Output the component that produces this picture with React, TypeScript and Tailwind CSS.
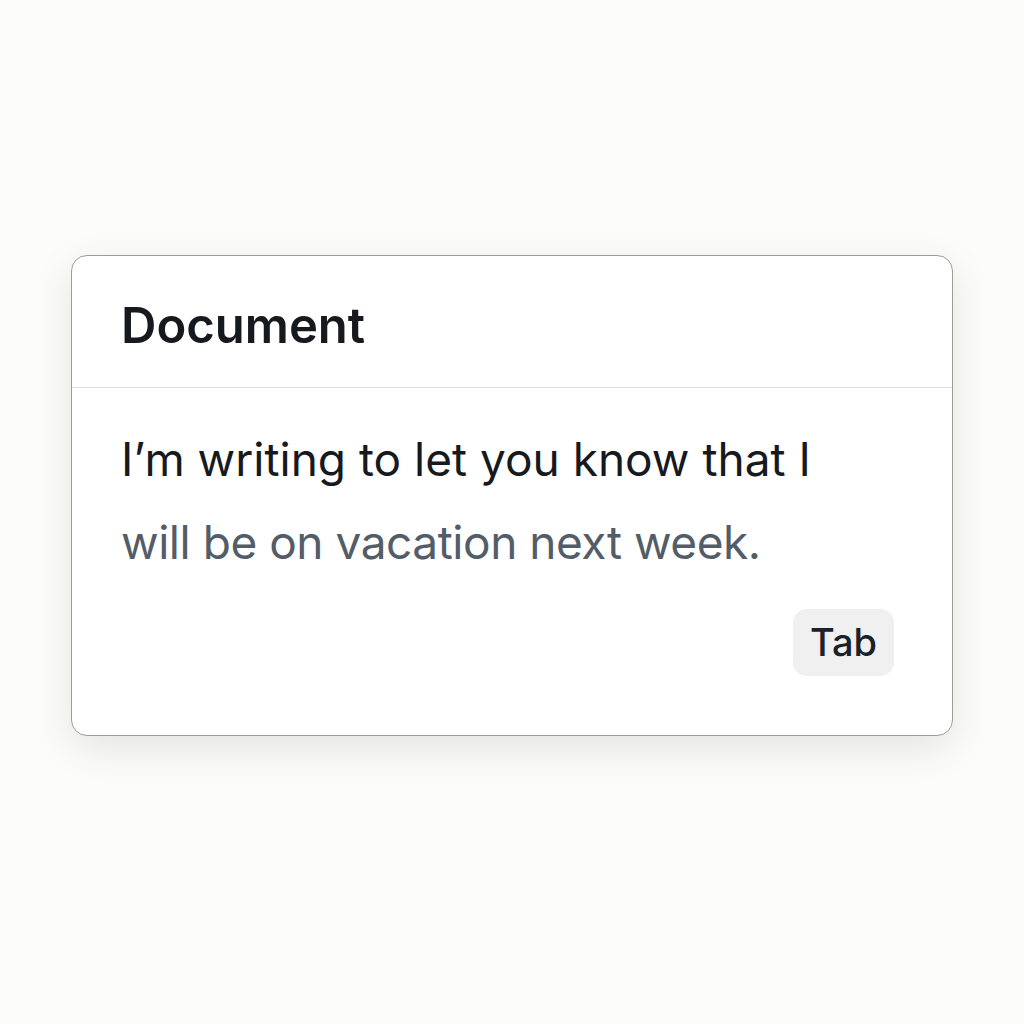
export default function App() {
  return (
    <div className="w-[1024px] h-[1024px] bg-[#fcfcfb] flex items-start justify-center pt-[255px]" style={{ fontFamily: 'Inter, "Noto Sans", sans-serif' }}>
      <div className="w-[882px] h-[481px] bg-white border border-[#9c9c9c] rounded-[16px] shadow-[0_12px_40px_rgba(0,0,0,0.10)] flex flex-col">
        <div className="h-[132px] border-b border-[#dcdcdc] px-[49px] pt-[40px]">
          <h1 className="text-[49px] leading-[59px] font-semibold text-[#16191d]">Document</h1>
        </div>
        <div className="flex-1 px-[49px] pt-[30px] flex flex-col">
          <p className="text-[46px] leading-[83px] text-[#16191d]">
            I’m writing to let you know that I
            <br />
            <span className="text-[#535d68] tracking-[-0.01em]">will be on vacation next week.</span>
          </p>
          <div className="flex justify-end pr-[9px] mt-[25px]">
            <div className="w-[101px] h-[67px] rounded-[14px] bg-[#f0f0f0] flex items-center justify-center text-[38px] font-medium text-[#1b2128]">Tab</div>
          </div>
        </div>
      </div>
    </div>
  );
}
